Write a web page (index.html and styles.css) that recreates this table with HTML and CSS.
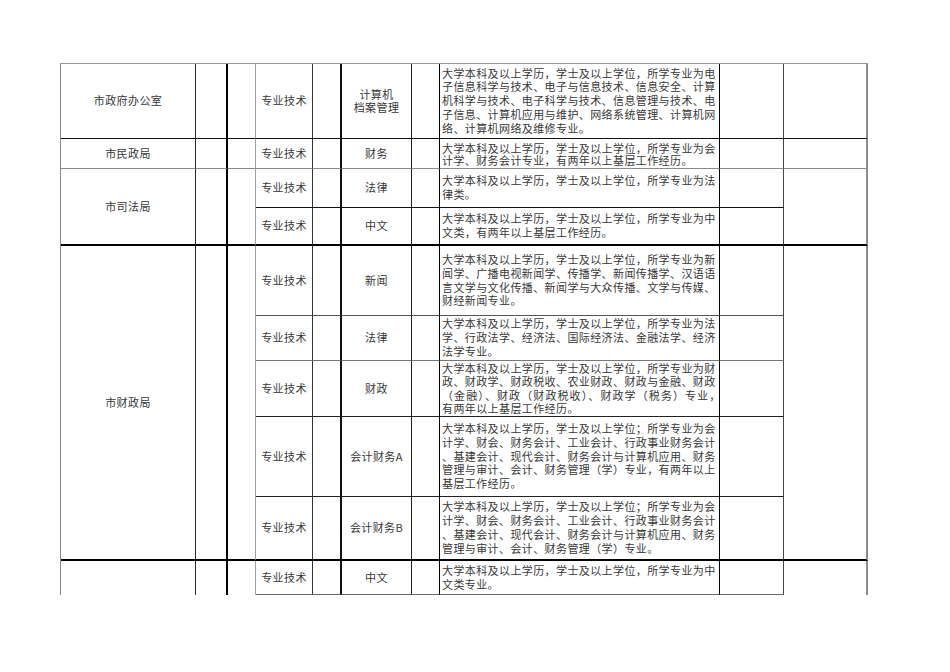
FILE: index.html
```html
<!DOCTYPE html>
<html lang="zh-CN">
<head>
<meta charset="utf-8">
<title>职位表</title>
<link rel="stylesheet" href="styles.css">
</head>
<body>
<div class="sheet">
  <!-- row 1 -->
  <div class="cell c1 r1">市政府办公室</div>
  <div class="cell c2 r1"></div>
  <div class="cell c3 r1"></div>
  <div class="cell c4 r1">专业技术</div>
  <div class="cell c5 r1"></div>
  <div class="cell c6 r1 pair"><div class="txt">计算机<br>档案管理</div></div>
  <div class="cell c7 r1"></div>
  <div class="cell c8 r1 desc"><div class="txt">大学本科及以上学历，学士及以上学位，所学专业为电<br>子信息科学与技术、电子与信息技术、信息安全、计算<br>机科学与技术、电子科学与技术、信息管理与技术、电<br>子信息、计算机应用与维护、网络系统管理、计算机网<br>络、计算机网络及维修专业。</div></div>
  <div class="cell c9 r1"></div>
  <div class="cell c10 r1"></div>

  <!-- row 2 -->
  <div class="cell c1 r2">市民政局</div>
  <div class="cell c2 r2"></div>
  <div class="cell c3 r2"></div>
  <div class="cell c4 r2">专业技术</div>
  <div class="cell c5 r2"></div>
  <div class="cell c6 r2">财务</div>
  <div class="cell c7 r2"></div>
  <div class="cell c8 r2 desc squeeze"><div class="txt">大学本科及以上学历，学士及以上学位，所学专业为会<br>计学、财务会计专业，有两年以上基层工作经历。</div></div>
  <div class="cell c9 r2"></div>
  <div class="cell c10 r2"></div>

  <!-- row 3 -->
  <div class="cell c1 r4 span2">市司法局</div>
  <div class="cell c2 r4 span2"></div>
  <div class="cell c3 r4 span2"></div>
  <div class="cell c4 r3">专业技术</div>
  <div class="cell c5 r3"></div>
  <div class="cell c6 r3">法律</div>
  <div class="cell c7 r3"></div>
  <div class="cell c8 r3 desc"><div class="txt">大学本科及以上学历，学士及以上学位，所学专业为法<br>律类。</div></div>
  <div class="cell c9 r3"></div>
  <div class="cell c10 r4 span2"></div>

  <!-- row 4 -->
  <div class="cell c4 r4">专业技术</div>
  <div class="cell c5 r4"></div>
  <div class="cell c6 r4">中文</div>
  <div class="cell c7 r4"></div>
  <div class="cell c8 r4 desc"><div class="txt">大学本科及以上学历，学士及以上学位，所学专业为中<br>文类，有两年以上基层工作经历。</div></div>
  <div class="cell c9 r4"></div>

  <!-- row 5 -->
  <div class="cell c1 r9 span5">市财政局</div>
  <div class="cell c2 r9 span5"></div>
  <div class="cell c3 r9 span5"></div>
  <div class="cell c4 r5">专业技术</div>
  <div class="cell c5 r5"></div>
  <div class="cell c6 r5">新闻</div>
  <div class="cell c7 r5"></div>
  <div class="cell c8 r5 desc"><div class="txt">大学本科及以上学历，学士及以上学位，所学专业为新<br>闻学、广播电视新闻学、传播学、新闻传播学、汉语语<br>言文学与文化传播、新闻学与大众传播、文学与传媒、<br>财经新闻专业。</div></div>
  <div class="cell c9 r5"></div>
  <div class="cell c10 r9 span5"></div>

  <!-- row 6 -->
  <div class="cell c4 r6">专业技术</div>
  <div class="cell c5 r6"></div>
  <div class="cell c6 r6">法律</div>
  <div class="cell c7 r6"></div>
  <div class="cell c8 r6 desc"><div class="txt">大学本科及以上学历，学士及以上学位，所学专业为法<br>学、行政法学、经济法、国际经济法、金融法学、经济<br>法学专业。</div></div>
  <div class="cell c9 r6"></div>

  <!-- row 7 -->
  <div class="cell c4 r7">专业技术</div>
  <div class="cell c5 r7"></div>
  <div class="cell c6 r7">财政</div>
  <div class="cell c7 r7"></div>
  <div class="cell c8 r7 desc snug"><div class="txt">大学本科及以上学历，学士及以上学位，所学专业为财<br>政、财政学、财政税收、农业财政、财政与金融、财政<br><span class="wide">（金融）、财政（财政税收）、财政学（税务）专业，</span><br>有两年以上基层工作经历。</div></div>
  <div class="cell c9 r7"></div>

  <!-- row 8 -->
  <div class="cell c4 r8">专业技术</div>
  <div class="cell c5 r8"></div>
  <div class="cell c6 r8">会计财务A</div>
  <div class="cell c7 r8"></div>
  <div class="cell c8 r8 desc"><div class="txt">大学本科及以上学历，学士及以上学位；所学专业为会<br>计学、财会、财务会计、工业会计、行政事业财务会计<br>、基建会计、现代会计、财务会计与计算机应用、财务<br>管理与审计、会计、财务管理（学）专业，有两年以上<br>基层工作经历。</div></div>
  <div class="cell c9 r8"></div>

  <!-- row 9 -->
  <div class="cell c4 r9">专业技术</div>
  <div class="cell c5 r9"></div>
  <div class="cell c6 r9">会计财务B</div>
  <div class="cell c7 r9"></div>
  <div class="cell c8 r9 desc"><div class="txt">大学本科及以上学历，学士及以上学位；所学专业为会<br>计学、财会、财务会计、工业会计、行政事业财务会计<br>、基建会计、现代会计、财务会计与计算机应用、财务<br>管理与审计、会计、财务管理（学）专业。</div></div>
  <div class="cell c9 r9"></div>

  <!-- row 10 (continues on next page) -->
  <div class="cell c1 open"></div>
  <div class="cell c2 open"></div>
  <div class="cell c3 open"></div>
  <div class="cell c4 r10">专业技术</div>
  <div class="cell c5 r10"></div>
  <div class="cell c6 r10">中文</div>
  <div class="cell c7 r10"></div>
  <div class="cell c8 r10 desc"><div class="txt">大学本科及以上学历，学士及以上学位，所学专业为中<br>文类专业。</div></div>
  <div class="cell c9 r10"></div>
  <div class="cell c10 open"></div>
</div>
</body>
</html>
```

FILE: styles.css
```css
html, body {
  margin: 0;
  padding: 0;
  background: #ffffff;
}

body {
  padding: 63px 0 0 60px;
  font-family: "Noto Sans CJK SC", "Noto Sans", sans-serif;
  color: #383838;
}

.sheet {
  display: grid;
  width: max-content;
  grid-template-columns: 135px 32px 28px 57px 29px 70px 28px 280px 64px 84px;
  grid-template-rows: 75px 30px 39px 38px 70px 45px 56px 80px 64px 34px;
  border-top: 1px solid #9a9a9a;
  border-left: 1px solid #8a8a8a;
}

.cell {
  box-sizing: border-box;
  display: flex;
  align-items: center;
  justify-content: center;
  text-align: center;
  font-size: 11px;
  letter-spacing: 0.4px;
  line-height: 13.8px;
  white-space: nowrap;
  overflow: hidden;
  border-right: 1px solid #333;
  border-bottom: 0 solid transparent;
}

.txt {
  display: block;
}

.pair { line-height: 13.3px; }

.desc {
  justify-content: flex-start;
  text-align: left;
  padding-left: 2px;
}

.squeeze { line-height: 12px; }

.snug { line-height: 13.4px; }

.wide { letter-spacing: 1.1px; }

.span2 { grid-row: span 2; }
.span5 { grid-row: span 5; }

/* column right borders */
.c1 { border-right: 1px solid #2b2b2b; }
.c2 { border-right: 2px solid #000; }
.c3 { border-right: 1px solid #a0a0a0; }
.c4 { border-right: 1px solid #333; }
.c5 { border-right: 2px solid #111; }
.c6 { border-right: 1px solid #222; }
.c7 { border-right: 1px solid #000; }
.c8 { border-right: 1px solid #000; }
.c9 { border-right: 1px solid #444; }
.c10 { border-right: 2px solid #8c8c8c; }

/* row bottom borders */
.r1 { border-bottom: 1px solid #111; }
.r2 { border-bottom: 1px solid #8a8a8a; }
.r3 { border-bottom: 1px solid #111; }
.r4 { border-bottom: 2px solid #000; }
.r5 { border-bottom: 1px solid #555; }
.r6 { border-bottom: 1px solid #777; }
.r7 { border-bottom: 1px solid #222; }
.r8 { border-bottom: 1px solid #222; }
.r9 { border-bottom: 2px solid #000; }
.r10 { border-bottom: 1px solid #666; }
.open { border-bottom: 0; }
```
